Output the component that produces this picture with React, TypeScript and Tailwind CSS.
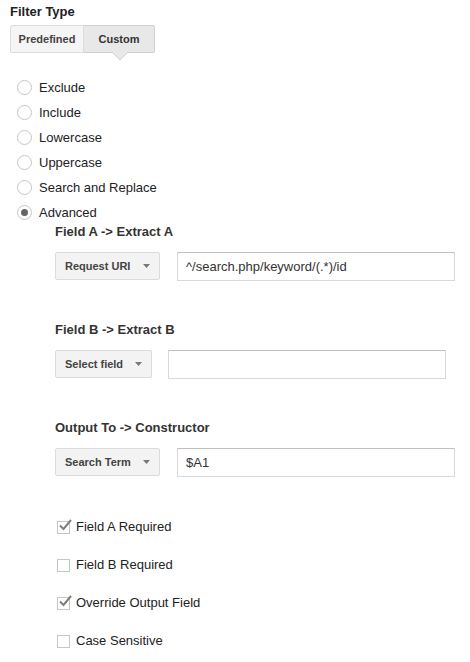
import React from "react";

const font = { fontFamily: '"Liberation Sans", Arial, sans-serif' };

function Radio({ label, checked = false }: { label: string; checked?: boolean }) {
  return (
    <div className="flex h-[25px] items-center">
      <div className="ml-[7px] flex h-[15px] w-[15px] items-center justify-center rounded-full border border-[#c6c6c6] bg-white">
        {checked && <div className="h-[7px] w-[7px] rounded-full bg-[#666]" />}
      </div>
      <span className="ml-[7px] text-[13px] leading-[16px] text-[#222]">{label}</span>
    </div>
  );
}

function Check({ label, checked = false }: { label: string; checked?: boolean }) {
  return (
    <div className="flex h-[38px] items-center">
      <div className="relative ml-[47px] h-[13px] w-[13px] border border-[#c6c6c6] bg-white">
        {checked && (
          <svg className="absolute left-[0px] top-[-4px]" width="15" height="15" viewBox="0 0 15 15">
            <path d="M2 7.5 L5.5 11 L13 2" fill="none" stroke="#7d7d7d" strokeWidth="2" />
          </svg>
        )}
      </div>
      <span className="ml-[6px] text-[13px] leading-[16px] text-[#222]">{label}</span>
    </div>
  );
}

function Dropdown({ label, width }: { label: string; width: string }) {
  return (
    <div
      className={`flex h-[28px] ${width} items-center justify-between rounded-[2px] border border-[#dcdcdc] bg-[#f3f3f3] pl-[9px] pr-[9px]`}
    >
      <span className="text-[11px] font-bold leading-[14px] text-[#444]">{label}</span>
      <svg width="7" height="4" viewBox="0 0 7 4">
        <path d="M0 0 L7 0 L3.5 4 Z" fill="#777" />
      </svg>
    </div>
  );
}

function Block({
  title,
  dd,
  ddWidth,
  value,
  inputWidth,
  gap,
  mt,
}: {
  title: string;
  dd: string;
  ddWidth: string;
  value: string;
  inputWidth: string;
  gap: string;
  mt: string;
}) {
  return (
    <div className={`${mt} ml-[45px]`}>
      <div className="text-[13px] font-bold leading-[14px] text-[#333]">{title}</div>
      <div className={`mt-[13px] flex ${gap}`}>
        <Dropdown label={dd} width={ddWidth} />
        <div
          className={`flex h-[29px] ${inputWidth} items-center border border-[#d9d9d9] border-t-[#c0c0c0] bg-white pl-[8px] text-[13px] text-[#333]`}
        >
          {value}
        </div>
      </div>
    </div>
  );
}

export default function App() {
  return (
    <div className="min-h-[662px] w-[470px] bg-white pl-[10px] pt-[4px]" style={font}>
      <div className="text-[13px] font-bold leading-[16px] text-[#222]">Filter Type</div>
      <div className="relative mt-[5px] flex h-[28px] w-[145px]">
        <div className="flex w-[74px] items-center justify-center rounded-l-[2px] border border-[#dcdcdc] bg-[#f5f5f5] text-[11px] font-bold text-[#444]">
          Predefined
        </div>
        <div className="flex w-[71px] items-center justify-center rounded-r-[2px] border border-l-0 border-[#d0d0d0] bg-[#e8e8e8] text-[11px] font-bold text-[#333]">
          Custom
        </div>
        <svg className="absolute left-[102px] top-[27px]" width="16" height="9" viewBox="0 0 16 9">
          <path d="M0 0 L8 8 L16 0" fill="#e8e8e8" stroke="#d0d0d0" strokeWidth="1" />
          <path d="M1 0 L15 0" stroke="#e8e8e8" strokeWidth="1.5" />
        </svg>
      </div>
      <div className="mt-[22px]">
        <Radio label="Exclude" />
        <Radio label="Include" />
        <Radio label="Lowercase" />
        <Radio label="Uppercase" />
        <Radio label="Search and Replace" />
        <Radio label="Advanced" checked />
      </div>
      <Block
        mt="mt-0"
        title="Field A -> Extract A"
        dd="Request URI"
        ddWidth="w-[105px]"
        value="^/search.php/keyword/(.*)/id"
        inputWidth="w-[278px]"
        gap="gap-[17px]"
      />
      <Block
        mt="mt-[42px]"
        title="Field B -> Extract B"
        dd="Select field"
        ddWidth="w-[97px]"
        value=""
        inputWidth="w-[278px]"
        gap="gap-[16px]"
      />
      <Block
        mt="mt-[42px]"
        title="Output To -> Constructor"
        dd="Search Term"
        ddWidth="w-[105px]"
        value="$A1"
        inputWidth="w-[278px]"
        gap="gap-[17px]"
      />
      <div className="mt-[31px]">
        <Check label="Field A Required" checked />
        <Check label="Field B Required" />
        <Check label="Override Output Field" checked />
        <Check label="Case Sensitive" />
      </div>
    </div>
  );
}
